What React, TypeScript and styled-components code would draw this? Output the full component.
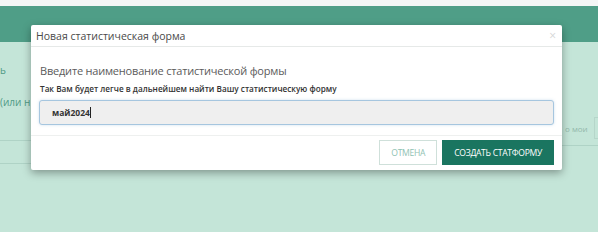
import React from 'react';
import styled, { createGlobalStyle } from 'styled-components';

const GlobalStyle = createGlobalStyle`
  html, body {
    margin: 0;
    padding: 0;
    width: 598px;
    height: 232px;
    overflow: hidden;
    font-family: "Open Sans", "Liberation Sans", sans-serif;
  }
`;

const Page = styled.div`
  position: relative;
  width: 598px;
  height: 232px;
  display: flex;
  flex-direction: column;
  background: #c4e5d8;
`;

const TopStrip = styled.div`
  height: 6px;
  background: #f3f6f5;
`;

const Header = styled.div`
  height: 36px;
  background: #4f9e87;
`;

const Content = styled.div`
  flex: 1;
  display: flex;
  justify-content: space-between;
`;

const LeftPane = styled.div`
  width: 31px;
  display: flex;
  flex-direction: column;
`;

const RightPane = styled.div`
  width: 36px;
  display: flex;
  flex-direction: column;
  padding-top: 75px;
`;

const BackLink = styled.div<{ $top: number }>`
  margin-top: ${(p) => p.$top}px;
  font-size: 10px;
  line-height: 14px;
  color: #4f9a85;
  white-space: nowrap;
`;

const BackRule = styled.div<{ $top: number }>`
  margin-top: ${(p) => p.$top}px;
  height: 1px;
  background: #afd3c6;
`;

const FilterRow = styled.div`
  display: flex;
  align-items: center;
  height: 22px;
  gap: 6px;
  padding-left: 3px;
`;

const FilterText = styled.span`
  font-size: 8px;
  color: #93b8ab;
  white-space: nowrap;
`;

const FilterBox = styled.div`
  width: 10px;
  height: 20px;
  border: 1px solid #b6d6ca;
  border-right: none;
`;

const Modal = styled.div`
  position: absolute;
  left: 31px;
  top: 25px;
  width: 531px;
  height: 145px;
  background: #fff;
  border-radius: 2px;
  box-shadow: 0 3px 9px rgba(0, 0, 0, 0.35);
  display: flex;
  flex-direction: column;
`;

const TitleBar = styled.div`
  height: 21px;
  display: flex;
  align-items: center;
  justify-content: space-between;
  padding: 0 6px 0 5px;
  border-bottom: 1px solid #e6e9e8;
`;

const Title = styled.span`
  font-size: 10.5px;
  color: #4a4a4a;
`;

const Close = styled.span`
  font-size: 12px;
  color: #d6d6d6;
  line-height: 1;
`;

const Body = styled.div`
  padding: 15px 8px 10px;
  display: flex;
  flex-direction: column;
`;

const Heading = styled.div`
  font-size: 11px;
  letter-spacing: -0.2px;
  line-height: 18px;
  color: #5b5b5b;
  padding-left: 1px;
`;

const Hint = styled.div`
  margin-top: 2px;
  font-size: 8.2px;
  line-height: 14px;
  font-weight: 600;
  color: #333;
  padding-left: 1px;
`;

const Input = styled.div`
  margin-top: 4px;
  height: 23px;
  border: 1px solid #a6c6df;
  border-radius: 3px;
  background: #efefef;
  box-shadow: 0 0 3px rgba(120, 170, 210, 0.35);
  display: flex;
  align-items: center;
  padding-left: 12px;
  font-size: 8.5px;
  font-weight: 700;
  color: #333;
`;

const Caret = styled.span`
  width: 1px;
  height: 11px;
  background: #222;
`;

const Footer = styled.div`
  border-top: 1px solid #eef0ef;
  display: flex;
  justify-content: flex-end;
  gap: 5px;
  padding: 4px 8px 0;
`;

const Button = styled.button<{ $primary?: boolean }>`
  height: 25px;
  padding: 0 11px;
  font-family: inherit;
  font-size: 8.6px;
  letter-spacing: -0.3px;
  border-radius: 0;
  cursor: pointer;
  border: 1px solid ${(p) => (p.$primary ? '#1a7560' : '#cfe0da')};
  background: ${(p) => (p.$primary ? '#1a7560' : '#fff')};
  color: ${(p) => (p.$primary ? '#fff' : '#8fc2b3')};
`;

export default function App() {
  return (
    <>
      <GlobalStyle />
      <Page>
        <TopStrip />
        <Header />
        <Content>
          <LeftPane>
            <BackLink $top={21}>ь</BackLink>
            <BackLink $top={18}>(или н</BackLink>
            <BackRule $top={31} />
            <BackRule $top={22} />
          </LeftPane>
          <RightPane>
            <FilterRow>
              <FilterText>о мои</FilterText>
              <FilterBox />
            </FilterRow>
            <BackRule $top={6} />
          </RightPane>
        </Content>
        <Modal>
          <TitleBar>
            <Title>Новая статистическая форма</Title>
            <Close>×</Close>
          </TitleBar>
          <Body>
            <Heading>Введите наименование статистической формы</Heading>
            <Hint>Так Вам будет легче в дальнейшем найти Вашу статистическую форму</Hint>
            <Input>
              май2024
              <Caret />
            </Input>
          </Body>
          <Footer>
            <Button>ОТМЕНА</Button>
            <Button $primary>СОЗДАТЬ СТАТФОРМУ</Button>
          </Footer>
        </Modal>
      </Page>
    </>
  );
}
